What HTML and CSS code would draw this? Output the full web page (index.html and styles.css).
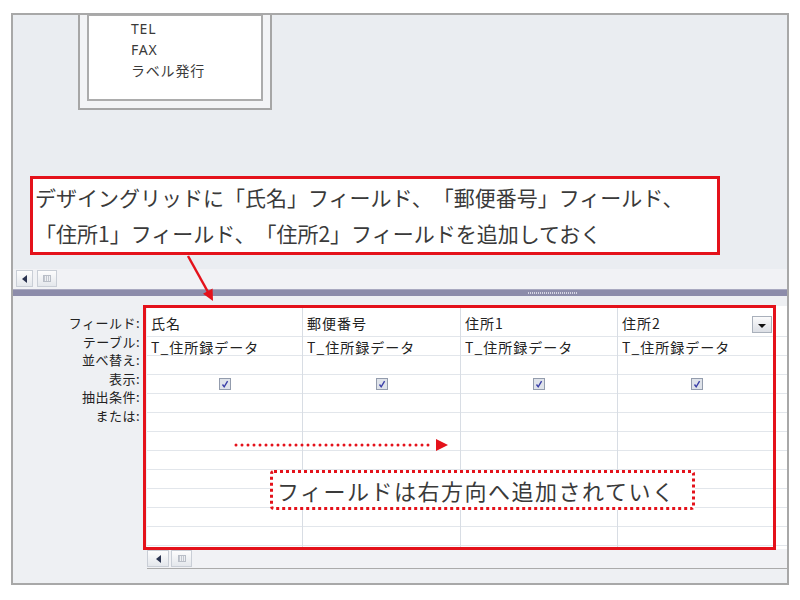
FILE: index.html
```html
<!DOCTYPE html>
<html lang="ja">
<head>
<meta charset="utf-8">
<title>クエリデザイン</title>
<link rel="stylesheet" href="styles.css">
</head>
<body>
<div class="page">
  <div class="frame">
    <div class="upper">
      <div class="canvas">
        <div class="tablebox">
          <div class="tablebox-inner">
            <div class="fieldlist">
              <div>TEL</div>
              <div>FAX</div>
              <div>ラベル発行</div>
            </div>
          </div>
        </div>
      </div>
      <div class="hscroll upper-scroll">
        <span class="sbtn sbtn-arrow"><span class="tri-left"></span></span>
        <span class="sbtn sbtn-thumb"><span class="grip-lines"></span></span>
      </div>
    </div>
    <div class="splitter"><span class="split-grip"></span></div>
    <div class="lower">
      <div class="labels">
        <div>フィールド:</div>
        <div>テーブル:</div>
        <div>並べ替え:</div>
        <div>表示:</div>
        <div>抽出条件:</div>
        <div>または:</div>
      </div>
      <div class="gridwrap">
        <div class="grid">
          <div class="col c1">
            <div class="cell-field"><span>氏名</span></div>
            <div class="cell">T_住所録データ</div>
            <div class="cell"></div>
            <div class="cell cell-show"><svg class="chk" viewBox="0 0 12 12"><rect x="0.5" y="0.5" width="11" height="11" fill="#dfe3ea" stroke="#939cad"/><path d="M3.5 6.5 L5.2 8.8 L8.6 3.2" fill="none" stroke="#3a3fa8" stroke-width="1.4"/></svg></div>
          </div>
          <div class="col c2">
            <div class="cell-field"><span>郵便番号</span></div>
            <div class="cell">T_住所録データ</div>
            <div class="cell"></div>
            <div class="cell cell-show"><svg class="chk" viewBox="0 0 12 12"><rect x="0.5" y="0.5" width="11" height="11" fill="#dfe3ea" stroke="#939cad"/><path d="M3.5 6.5 L5.2 8.8 L8.6 3.2" fill="none" stroke="#3a3fa8" stroke-width="1.4"/></svg></div>
          </div>
          <div class="col c3">
            <div class="cell-field"><span>住所1</span></div>
            <div class="cell">T_住所録データ</div>
            <div class="cell"></div>
            <div class="cell cell-show"><svg class="chk" viewBox="0 0 12 12"><rect x="0.5" y="0.5" width="11" height="11" fill="#dfe3ea" stroke="#939cad"/><path d="M3.5 6.5 L5.2 8.8 L8.6 3.2" fill="none" stroke="#3a3fa8" stroke-width="1.4"/></svg></div>
          </div>
          <div class="col c4">
            <div class="cell-field"><span>住所2</span><span class="dropbtn"><span class="tri-down"></span></span></div>
            <div class="cell">T_住所録データ</div>
            <div class="cell"></div>
            <div class="cell cell-show"><svg class="chk" viewBox="0 0 12 12"><rect x="0.5" y="0.5" width="11" height="11" fill="#dfe3ea" stroke="#939cad"/><path d="M3.5 6.5 L5.2 8.8 L8.6 3.2" fill="none" stroke="#3a3fa8" stroke-width="1.4"/></svg></div>
          </div>
          <div class="col c5">
            <div class="cell-field"></div>
          </div>
        </div>
        <div class="hscroll lower-scroll">
          <span class="sbtn sbtn-arrow2"><span class="tri-left"></span></span>
          <span class="sbtn sbtn-thumb2"><span class="grip-lines"></span></span>
        </div>
      </div>
    </div>
  </div>

  <div class="callout">デザイングリッドに「氏名」フィールド、「郵便番号」フィールド、<br>「住所1」フィールド、「住所2」フィールドを追加しておく</div>
  <div class="gridmark"></div>
  <div class="hintbox">フィールドは右方向へ追加されていく</div>
  <svg class="arrows" viewBox="0 0 800 600" width="800" height="600">
    <line x1="188" y1="256" x2="208" y2="292" stroke="#e4121b" stroke-width="2.5"/>
    <polygon points="213,301 212.6,288.5 203,293.8" fill="#e4121b"/>
    <line x1="236" y1="445" x2="434" y2="445" stroke="#e4121b" stroke-width="3" stroke-linecap="round" stroke-dasharray="0 6"/>
    <polygon points="436,439 448,445 436,451" fill="#e4121b"/>
  </svg>
</div>
</body>
</html>
```
FILE: styles.css
```css
* { box-sizing: border-box; }
html, body { margin: 0; padding: 0; background: #fff; }
body {
  width: 800px; height: 600px; overflow: hidden;
  font-family: "Liberation Sans", "Noto Sans CJK JP", sans-serif;
  color: #222;
  text-spacing-trim: space-all;
}
.page { position: relative; width: 800px; height: 600px; padding: 13px 0 0 11px; }

.frame {
  width: 778px; height: 572px;
  border: 2px solid #a8a8a8;
  display: flex; flex-direction: column;
}

/* upper canvas */
.upper { height: 274px; display: flex; flex-direction: column; background: #eaedf1; }
.canvas { position: relative; height: 254px; overflow: hidden; }
.tablebox {
  position: absolute; left: 65px; top: -10px;
  width: 194px; height: 105px;
  border: 2px solid #a6a6a6; background: #f3f4f6; padding: 7px;
}
.tablebox-inner {
  height: 100%; border: 2px solid #acacac; background: #fff;
  padding: 2px 0 0 42px;
}
.fieldlist div {
  font-family: "Noto Sans", "Noto Sans CJK JP", sans-serif;
  font-size: 14px; line-height: 21px; letter-spacing: 0.8px; color: #3a3a3a;
}

/* scrollbars */
.hscroll { display: flex; }
.upper-scroll { height: 20px; background: #f1f2f5; gap: 4px; padding: 1px 0 0 3px; }
.sbtn {
  height: 17px;
  border: 1px solid #c9ced6;
  background: linear-gradient(#fdfdfd, #e4e7ec);
  display: flex; align-items: center; justify-content: center;
}
.sbtn-arrow { width: 17px; }
.sbtn-thumb { width: 20px; }
.sbtn-arrow2 { width: 22px; }
.sbtn-thumb2 { width: 21px; }
.tri-left {
  width: 0; height: 0;
  border-top: 4px solid transparent; border-bottom: 4px solid transparent;
  border-right: 5px solid #2a3350;
}
.grip-lines {
  width: 8px; height: 7px;
  border: 1px solid #b9bec7;
  background: repeating-linear-gradient(to right, #c3c7cf 0 1px, #eef0f3 1px 2px);
}

/* splitter */
.splitter {
  height: 7px; background: #8c8caa; border-top: 1px solid #a9a9c0;
  display: flex; padding-left: 515px; align-items: center;
}
.split-grip {
  width: 49px; height: 2px;
  background: repeating-linear-gradient(to right, #d6d6e4 0 1px, transparent 1px 2px);
}

/* lower grid */
.lower { flex: 1; display: flex; background: #eef0f3; padding-top: 10px; }
.labels {
  width: 134px; padding: 8px 7px 0 0; text-align: right;
  font-family: "Noto Sans CJK JP", sans-serif;
  font-size: 13px; line-height: 18.6px; letter-spacing: 0.5px; color: #222;
}
.gridwrap { width: 640px; display: flex; flex-direction: column; }
.grid { height: 243px; overflow: hidden; display: flex; }
.col {
  height: 100%;
  border-right: 1px solid #d8dde4;
  background: repeating-linear-gradient(to bottom, transparent 0 18px, #e2e6eb 18px 19px) 0 12px / 100% 19px, #fff;
  font-family: "Noto Sans CJK JP", sans-serif;
  font-size: 14px; line-height: 16px; letter-spacing: 1px; color: #222;
}
.c1 { width: 156px; }
.c2 { width: 158px; }
.c3 { width: 157px; }
.c4 { width: 158px; }
.c5 { width: 11px; border-right: 0; }
.cell-field {
  height: 31px; padding: 9px 3px 0 4px; background: #fff;
  border-bottom: 1px solid #e2e6eb;
  display: flex; justify-content: space-between; align-items: flex-start;
}
.cell { height: 19px; padding: 2px 0 0 4px; white-space: nowrap; }
.cell-show { display: flex; justify-content: center; padding: 3px 0 0 0; }
.chk { width: 12px; height: 12px; display: block; }
.dropbtn {
  width: 20px; height: 17px; margin-top: 1px;
  border: 1px solid #a9b0bb;
  background: linear-gradient(#fbfbfc, #dcdfe5);
  display: flex; justify-content: center; align-items: flex-end; padding-bottom: 4px;
}
.tri-down {
  width: 0; height: 0;
  border-left: 4px solid transparent; border-right: 4px solid transparent;
  border-top: 4px solid #111;
}
.lower-scroll {
  height: 20px; background: #f1f2f5; gap: 2px; padding-top: 1px;
  border-bottom: 1px solid #ababab;
}

/* annotations */
.callout {
  position: absolute; left: 30px; top: 176px;
  width: 690px; height: 79px;
  border: 3px solid #e4121b; background: #fff;
  padding: 0 0 0 2px;
  font-family: "Noto Sans CJK JP", sans-serif;
  font-size: 21px; line-height: 36px; color: #3a3a3a;
  white-space: nowrap;
  text-spacing-trim: space-all;
}
.gridmark {
  position: absolute; left: 143px; top: 305px;
  width: 633px; height: 245px;
  border: 3px solid #e4121b;
}
.hintbox {
  position: absolute; left: 270px; top: 470px;
  width: 425px; height: 40px;
  border: 3px dotted #e4121b; border-radius: 4px; background: #fff;
  padding-left: 4px;
  font-family: "Noto Sans CJK JP", sans-serif;
  font-size: 22px; line-height: 34px; letter-spacing: 1.5px; color: #3a3a3a;
  white-space: nowrap;
}
.arrows { position: absolute; left: 0; top: 0; pointer-events: none; }
```
